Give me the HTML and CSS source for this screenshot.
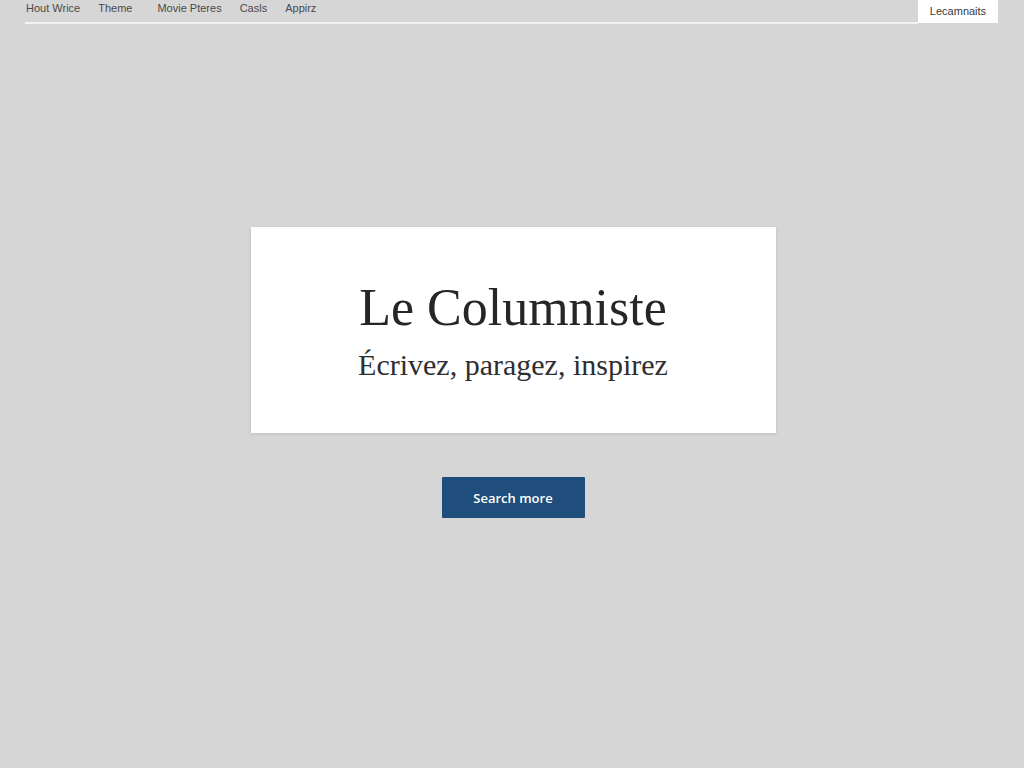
FILE: index.html
```html
<!DOCTYPE html>
<html lang="fr">
<head>
    <meta charset="UTF-8">
    <meta name="viewport" content="width=device-width, initial-scale=1.0">
    <title>Le Columniste</title>
    <link rel="stylesheet" href="styles.css">
</head>
<body>
    <div class="topbar">
        <nav class="nav">
            <a href="#">Hout Wrice</a>
            <a href="#">Theme</a>
            <a href="#" class="wide">Movie Pteres</a>
            <a href="#">Casls</a>
            <a href="#">Appirz</a>
        </nav>
        <a href="#" class="account">Lecamnaits</a>
    </div>

    <main class="main">
        <div class="card">
            <h1>Le Columniste</h1>
            <p>Écrivez, paragez, inspirez</p>
        </div>
        <button type="button" class="btn">Search more</button>
    </main>
</body>
</html>
```

FILE: styles.css
```css
* {
    margin: 0;
    padding: 0;
    box-sizing: border-box;
}
body {
    font-family: "Liberation Sans", Arial, sans-serif;
    background: #d6d6d6;
    min-height: 100vh;
}
.topbar {
    display: flex;
    align-items: flex-start;
    margin: 0 26px 0 25px;
}
.nav {
    flex: 1;
    display: flex;
    gap: 18px;
    height: 24px;
    padding: 2px 0 0 1px;
    border-bottom: 2px solid #f3f3f3;
}
.nav a {
    font-size: 11px;
    color: #4a4a4a;
    text-decoration: none;
}
.nav a.wide {
    margin-left: 7px;
}
.account {
    width: 80px;
    height: 23px;
    background: #ffffff;
    font-size: 11px;
    color: #3a3a3a;
    text-decoration: none;
    text-align: center;
    padding-top: 5px;
}
.main {
    display: flex;
    flex-direction: column;
    align-items: center;
    padding-top: 203px;
    padding-left: 2px;
}
.card {
    width: 525px;
    height: 206px;
    background: #ffffff;
    box-shadow: 0 1px 3px rgba(0, 0, 0, 0.12);
    text-align: center;
    padding-top: 55px;
    font-family: "Liberation Serif", "Times New Roman", serif;
    color: #262626;
}
.card h1 {
    font-size: 52px;
    font-weight: normal;
    line-height: 1;
}
.card p {
    font-size: 30px;
    line-height: 1;
    margin-top: 16px;
    color: #2e2e2e;
}
.btn {
    margin-top: 44px;
    width: 143px;
    height: 41px;
    background: #1f4e7c;
    color: #ffffff;
    border: none;
    border-radius: 1px;
    font-family: "Open Sans", sans-serif;
    font-size: 13px;
    font-weight: 600;
    cursor: pointer;
}
.btn:hover {
    background: #1a4269;
}
```
